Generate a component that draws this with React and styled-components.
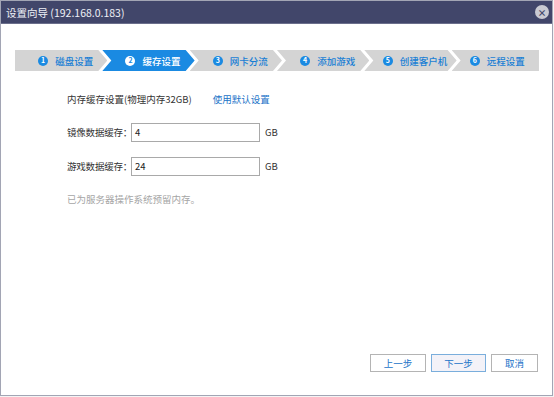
import React from 'react';
import styled, { createGlobalStyle } from 'styled-components';

const GlobalStyle = createGlobalStyle`
	html, body {
		margin: 0;
		padding: 0;
		background: #f4f4f4;
	}
	body {
		font-family: "Noto Sans CJK SC", "Noto Sans", sans-serif;
	}
`;

const Dialog = styled.div`
	width: 551px;
	height: 394px;
	border: 1px solid #a2a5b4;
	background: #fff;
	display: flex;
	flex-direction: column;
	box-sizing: content-box;
`;

const TitleBar = styled.div`
	height: 22px;
	background: #41466a;
	border-bottom: 1px solid #6b6f8c;
	display: flex;
	align-items: center;
	justify-content: space-between;
	padding: 0 3px 0 5px;
	color: #eef0f6;
	font-size: 10.5px;
`;

const CloseButton = styled.div`
	width: 14px;
	height: 14px;
	border-radius: 50%;
	background: #c9cad2;
	display: flex;
	align-items: center;
	justify-content: center;
	color: #41466a;
	font-size: 9px;
	font-weight: bold;
	line-height: 1;
`;

const Steps = styled.div`
	display: flex;
	width: 524px;
	height: 21px;
	margin: 26px 0 0 14px;
`;

const Step = styled.div`
	flex: 1;
	display: flex;
	align-items: center;
	justify-content: center;
	gap: 7px;
	padding-left: ${(p) => (p.last ? '4px' : '9px')};
	margin-left: ${(p) => (p.first ? '0' : '-5px')};
	background: ${(p) => (p.active ? '#1a8ae2' : '#d4d4d4')};
	color: ${(p) => (p.active ? '#fff' : '#1a7fd4')};
	font-size: 9.5px;
	font-weight: 500;
	clip-path: ${(p) =>
		p.first
			? 'polygon(0 0, calc(100% - 9px) 0, 100% 50%, calc(100% - 9px) 100%, 0 100%)'
			: p.last
			? 'polygon(0 0, 100% 0, 100% 100%, 0 100%, 9px 50%)'
			: 'polygon(0 0, calc(100% - 9px) 0, 100% 50%, calc(100% - 9px) 100%, 0 100%, 9px 50%)'};
`;

const StepNum = styled.span`
	width: 10px;
	height: 10px;
	border-radius: 50%;
	background: ${(p) => (p.active ? '#fff' : '#1a8ae2')};
	color: ${(p) => (p.active ? '#1a8ae2' : '#fff')};
	font-size: 7px;
	font-weight: bold;
	display: flex;
	align-items: center;
	justify-content: center;
	line-height: 1;
`;

const Form = styled.div`
	padding: 21px 0 0 66px;
	font-size: 9.5px;
	color: #333;
	display: flex;
	flex-direction: column;
`;

const Heading = styled.div`
	display: flex;
	align-items: center;
	gap: 21px;
	height: 14px;
`;

const Link = styled.span`
	color: #1a73c8;
`;

const Row = styled.div`
	display: flex;
	align-items: center;
	height: 20px;
	margin-top: ${(p) => p.top}px;
`;

const Label = styled.span`
	width: 64px;
	flex-shrink: 0;
	white-space: nowrap;
	letter-spacing: -0.2px;
`;

const Input = styled.div`
	width: 124px;
	height: 17px;
	border: 1px solid #a9a9a9;
	padding-left: 3px;
	display: flex;
	align-items: center;
	color: #222;
`;

const Unit = styled.span`
	margin-left: 5px;
`;

const Note = styled.div`
	margin-top: 16px;
	color: #a5a5a5;
`;

const Footer = styled.div`
	margin-top: auto;
	display: flex;
	justify-content: flex-end;
	gap: 5px;
	padding: 0 14px 23px 0;
`;

const Button = styled.div`
	width: ${(p) => p.w}px;
	height: 18px;
	box-sizing: border-box;
	border: 1px solid ${(p) => (p.primary ? '#7aaedc' : '#b4b4b4')};
	background: ${(p) => (p.primary ? '#f3f2f8' : '#fff')};
	color: #1a73c8;
	font-size: 9.5px;
	display: flex;
	align-items: center;
	justify-content: center;
`;

const steps = ['磁盘设置', '缓存设置', '网卡分流', '添加游戏', '创建客户机', '远程设置'];

export default function App() {
	return (
		<>
			<GlobalStyle />
			<Dialog>
				<TitleBar>
					<span>设置向导 (192.168.0.183)</span>
					<CloseButton>×</CloseButton>
				</TitleBar>
				<Steps>
					{steps.map((s, i) => (
						<Step key={s} first={i === 0} last={i === steps.length - 1} active={i === 1}>
							<StepNum active={i === 1}>{i + 1}</StepNum>
							{s}
						</Step>
					))}
				</Steps>
				<Form>
					<Heading>
						<span>内存缓存设置(物理内存32GB)</span>
						<Link>使用默认设置</Link>
					</Heading>
					<Row top={16}>
						<Label>镜像数据缓存：</Label>
						<Input>4</Input>
						<Unit>GB</Unit>
					</Row>
					<Row top={14}>
						<Label>游戏数据缓存：</Label>
						<Input>24</Input>
						<Unit>GB</Unit>
					</Row>
					<Note>已为服务器操作系统预留内存。</Note>
				</Form>
				<Footer>
					<Button w={56}>上一步</Button>
					<Button w={55} primary>下一步</Button>
					<Button w={47}>取消</Button>
				</Footer>
			</Dialog>
		</>
	);
}
